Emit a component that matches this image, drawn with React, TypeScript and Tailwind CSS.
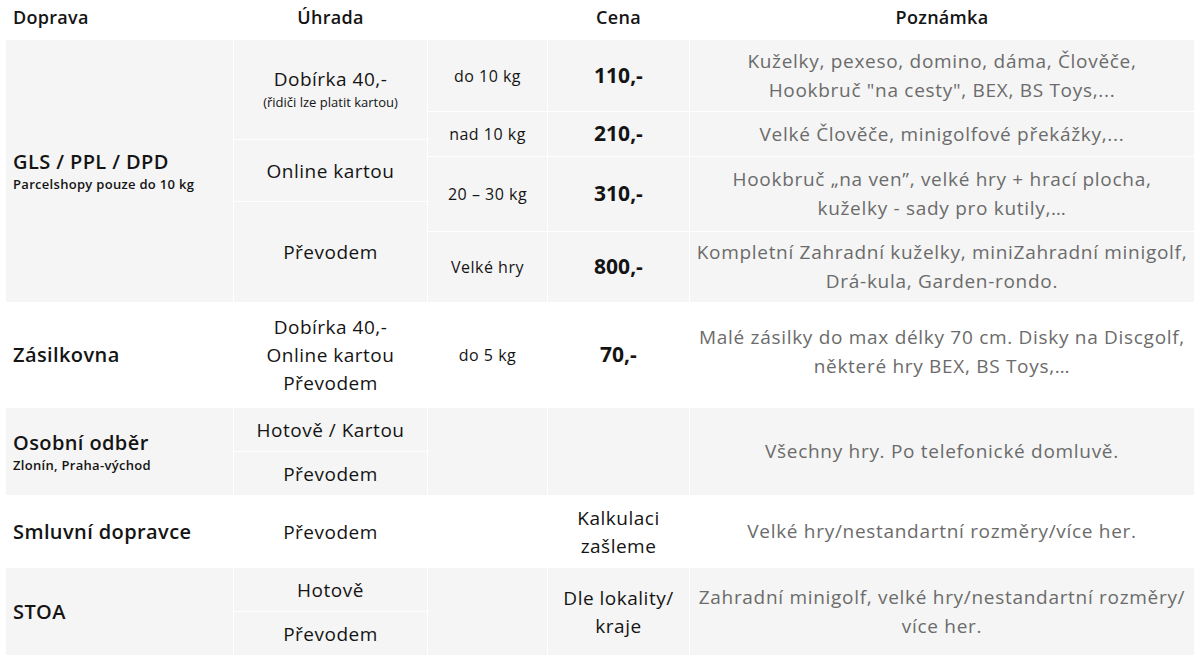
import React from "react";

const F = { fontFamily: "'Open Sans', 'Noto Sans', sans-serif" };

const cols = "grid grid-cols-[227px_193px_119px_141px_504px] gap-x-px";

function Cell({
  className = "",
  children,
}: {
  className?: string;
  children?: React.ReactNode;
}) {
  return (
    <div className={`flex flex-col items-center justify-center text-center ${className}`}>
      {children}
    </div>
  );
}

const gray = "bg-[#f5f5f5]";
const pay = "text-[19px] leading-[28px] tracking-[0.5px] text-[#141414]";
const weight = "text-[16px] tracking-[0.5px] text-[#141414]";
const price = "text-[21px] font-bold text-[#141414]";
const note = "text-[19px] leading-[29px] tracking-[0.7px] text-[#6b6b6b]";

function Title({ main, sub }: { main: string; sub?: string }) {
  return (
    <div className="flex flex-col items-start justify-center pl-[7px]">
      <div className="text-[20px] font-semibold tracking-[0.4px] text-[#141414] leading-[26px]">{main}</div>
      {sub && (
        <div className="text-[13px] font-semibold tracking-[0.3px] text-[#141414] leading-[18px]">{sub}</div>
      )}
    </div>
  );
}

export default function App() {
  return (
    <div style={F} className="w-[1200px] h-[664px] bg-white overflow-hidden">
      {/* Header */}
      <div
        className={`${cols} ml-[6px] h-[40px] items-center pb-[6px] text-[18px] font-semibold tracking-[0.3px] text-[#141414]`}
      >
        <div className="pl-[7px]">Doprava</div>
        <div className="text-center">Úhrada</div>
        <div />
        <div className="text-center">Cena</div>
        <div className="text-center">Poznámka</div>
      </div>

      {/* GLS */}
      <div
        className={`${cols} ml-[6px] h-[262px] gap-y-px grid-rows-[71px_27px_16px_44px_29px_70px]`}
      >
        <div className={`${gray} row-span-6 col-start-1 row-start-1 flex`}>
          <Title main="GLS / PPL / DPD" sub="Parcelshopy pouze do 10 kg" />
        </div>
        <Cell className={`${gray} col-start-2 row-start-1 row-span-2`}>
          <div className={pay}>Dobírka 40,-</div>
          <div className="text-[13px] leading-[18px] text-[#141414]">(řidiči lze platit kartou)</div>
          <div className="h-[4px]" />
        </Cell>
        <Cell className={`${gray} col-start-2 row-start-3 row-span-2`}>
          <div className={pay}>Online kartou</div>
        </Cell>
        <Cell className={`${gray} col-start-2 row-start-5 row-span-2`}>
          <div className={pay}>Převodem</div>
        </Cell>

        <Cell className={`${gray} col-start-3 row-start-1`}>
          <div className={weight}>do 10 kg</div>
        </Cell>
        <Cell className={`${gray} col-start-4 row-start-1`}>
          <div className={price}>110,-</div>
        </Cell>
        <Cell className={`${gray} col-start-5 row-start-1`}>
          <div className={note}>
            Kuželky, pexeso, domino, dáma, Člověče,
            <br />
            Hookbruč "na cesty", BEX, BS Toys,...
          </div>
        </Cell>

        <Cell className={`${gray} col-start-3 row-start-2 row-span-2`}>
          <div className={weight}>nad 10 kg</div>
        </Cell>
        <Cell className={`${gray} col-start-4 row-start-2 row-span-2`}>
          <div className={price}>210,-</div>
        </Cell>
        <Cell className={`${gray} col-start-5 row-start-2 row-span-2`}>
          <div className={note}>Velké Člověče, minigolfové překážky,...</div>
        </Cell>

        <Cell className={`${gray} col-start-3 row-start-4 row-span-2`}>
          <div className={weight}>20 – 30 kg</div>
        </Cell>
        <Cell className={`${gray} col-start-4 row-start-4 row-span-2`}>
          <div className={price}>310,-</div>
        </Cell>
        <Cell className={`${gray} col-start-5 row-start-4 row-span-2`}>
          <div className={note}>
            Hookbruč „na ven”, velké hry + hrací plocha,
            <br />
            kuželky - sady pro kutily,…
          </div>
        </Cell>

        <Cell className={`${gray} col-start-3 row-start-6`}>
          <div className={weight}>Velké hry</div>
        </Cell>
        <Cell className={`${gray} col-start-4 row-start-6`}>
          <div className={price}>800,-</div>
        </Cell>
        <Cell className={`${gray} col-start-5 row-start-6`}>
          <div className={note}>
            Kompletní Zahradní kuželky, miniZahradní minigolf,
            <br />
            Drá-kula, Garden-rondo.
          </div>
        </Cell>
      </div>

      {/* Zásilkovna */}
      <div className={`${cols} ml-[6px] h-[106px]`}>
        <div className="flex">
          <Title main="Zásilkovna" />
        </div>
        <Cell>
          <div className={pay}>
            Dobírka 40,-
            <br />
            Online kartou
            <br />
            Převodem
          </div>
        </Cell>
        <Cell>
          <div className={weight}>do 5 kg</div>
        </Cell>
        <Cell>
          <div className={price}>70,-</div>
        </Cell>
        <Cell className="pb-[6px]">
          <div className={note}>
            Malé zásilky do max délky 70 cm. Disky na Discgolf,
            <br />
            některé hry BEX, BS Toys,…
          </div>
        </Cell>
      </div>

      {/* Osobní odběr */}
      <div className={`${cols} ml-[6px] h-[87px] gap-y-px grid-rows-[43px_43px]`}>
        <div className={`${gray} row-span-2 col-start-1 row-start-1 flex`}>
          <Title main="Osobní odběr" sub="Zlonín, Praha-východ" />
        </div>
        <Cell className={`${gray} col-start-2 row-start-1`}>
          <div className={pay}>Hotově / Kartou</div>
        </Cell>
        <Cell className={`${gray} col-start-2 row-start-2`}>
          <div className={pay}>Převodem</div>
        </Cell>
        <Cell className={`${gray} col-start-3 row-start-1 row-span-2`} />
        <Cell className={`${gray} col-start-4 row-start-1 row-span-2`} />
        <Cell className={`${gray} col-start-5 row-start-1 row-span-2`}>
          <div className={note}>Všechny hry. Po telefonické domluvě.</div>
        </Cell>
      </div>

      {/* Smluvní dopravce */}
      <div className={`${cols} ml-[6px] h-[73px]`}>
        <div className="flex">
          <Title main="Smluvní dopravce" />
        </div>
        <Cell>
          <div className={pay}>Převodem</div>
        </Cell>
        <Cell />
        <Cell>
          <div className={pay}>
            Kalkulaci
            <br />
            zašleme
          </div>
        </Cell>
        <Cell>
          <div className={note}>Velké hry/nestandartní rozměry/více her.</div>
        </Cell>
      </div>

      {/* STOA */}
      <div className={`${cols} ml-[6px] h-[87px] gap-y-px grid-rows-[43px_43px]`}>
        <div className={`${gray} row-span-2 col-start-1 row-start-1 flex`}>
          <Title main="STOA" />
        </div>
        <Cell className={`${gray} col-start-2 row-start-1`}>
          <div className={pay}>Hotově</div>
        </Cell>
        <Cell className={`${gray} col-start-2 row-start-2`}>
          <div className={pay}>Převodem</div>
        </Cell>
        <Cell className={`${gray} col-start-3 row-start-1 row-span-2`} />
        <Cell className={`${gray} col-start-4 row-start-1 row-span-2`}>
          <div className={pay}>
            Dle lokality/
            <br />
            kraje
          </div>
        </Cell>
        <Cell className={`${gray} col-start-5 row-start-1 row-span-2`}>
          <div className={note}>
            Zahradní minigolf, velké hry/nestandartní rozměry/
            <br />
            více her.
          </div>
        </Cell>
      </div>
    </div>
  );
}
